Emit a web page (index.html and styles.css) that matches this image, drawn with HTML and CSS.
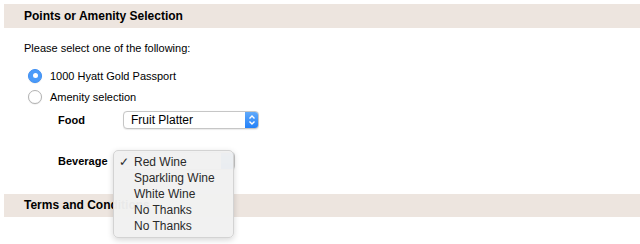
FILE: index.html
```html
<!DOCTYPE html>
<html>
<head>
<meta charset="utf-8">
<link rel="stylesheet" href="styles.css">
</head>
<body>
<div class="page">
  <div class="section-head">Points or Amenity Selection</div>
  <div class="intro">Please select one of the following:</div>
  <div class="options">
    <div class="radio-row"><span class="radio checked"></span><span>1000 Hyatt Gold Passport</span></div>
    <div class="radio-row"><span class="radio"></span><span>Amenity selection</span></div>
    <div class="field-row food">
      <span class="field-label">Food</span>
      <div class="select wide">
        <span class="select-text">Fruit Platter</span>
        <span class="select-btn">
          <svg width="14" height="18" viewBox="0 0 14 18"><path d="M4.5 7.5 L7 5 L9.5 7.5 M4.5 10.5 L7 13 L9.5 10.5" fill="none" stroke="#fff" stroke-width="1.4"/></svg>
        </span>
      </div>
    </div>
    <div class="field-row bev">
      <span class="field-label">Beverage</span>
      <div class="select narrow">
        <span class="select-text"></span>
        <span class="select-btn"></span>
      </div>
    </div>
  </div>
  <div class="section-head terms">Terms and Conditions</div>
  <div class="menu">
    <div class="menu-item"><span class="check">✓</span>Red Wine</div>
    <div class="menu-item">Sparkling Wine</div>
    <div class="menu-item">White Wine</div>
    <div class="menu-item">No Thanks</div>
    <div class="menu-item">No Thanks</div>
  </div>
</div>
</body>
</html>
```
FILE: styles.css
```css
html, body { margin: 0; padding: 0; background: #fff; }
body { font-family: "Liberation Sans", Arial, sans-serif; font-size: 11px; color: #000; }
.page { position: relative; width: 640px; height: 244px; overflow: hidden; }
.section-head {
  margin: 4px 0 0 4px;
  height: 24px;
  line-height: 24px;
  background: #ede5df;
  padding-left: 20px;
  font-weight: bold;
  font-size: 12px;
}
.intro { margin-top: 13px; padding-left: 24px; line-height: 14px; }
.options { margin-top: 10px; padding-left: 28px; }
.radio-row { display: flex; align-items: center; height: 21px; gap: 8px; }
.radio {
  width: 14px; height: 14px; border-radius: 50%;
  box-sizing: border-box;
  border: 1px solid #b3b3b3;
  background: #fff;
  box-shadow: 0 0.5px 1px rgba(0,0,0,0.12);
  display: flex; align-items: center; justify-content: center;
}
.radio.checked { border-color: #3d8ff5; background: #4b9bf9; }
.radio.checked::after { content: ""; width: 5px; height: 5px; border-radius: 50%; background: #fff; }
.field-row { display: flex; align-items: center; height: 18px; padding-left: 30px; }
.field-row.food { margin-top: 4px; }
.field-row.bev { margin-top: 23px; }
.field-label { width: 65px; font-weight: bold; }
.select {
  display: flex; align-items: center; justify-content: space-between;
  height: 18px; box-sizing: border-box;
  border: 1px solid #c6c6c6; border-radius: 4px; background: #fff;
  box-shadow: 0 0.5px 1px rgba(0,0,0,0.08);
  overflow: hidden;
}
.select.wide { width: 136px; }
.select.narrow { width: 112px; }
.select-text { padding-left: 7px; font-size: 12px; }
.select-btn {
  width: 14px; height: 18px; margin-right: -1px;
  background: linear-gradient(#64acfb, #1f7ef8);
  display: flex; align-items: center; justify-content: center;
}
.terms { margin-top: 24px; height: 23px; line-height: 23px; }
.menu {
  position: absolute; left: 113px; top: 150px;
  width: 121px; height: 88px; box-sizing: border-box;
  padding-top: 3px;
  background: rgba(241,241,241,0.97);
  border: 1px solid #d3d3d3;
  border-radius: 5px;
  box-shadow: 0 2px 6px rgba(0,0,0,0.16);
}
.menu-item { position: relative; height: 16px; line-height: 16px; padding-left: 20px; font-size: 12px; color: #2a2a2a; }
.check { position: absolute; left: 5px; top: 0; font-size: 12px; }
```
